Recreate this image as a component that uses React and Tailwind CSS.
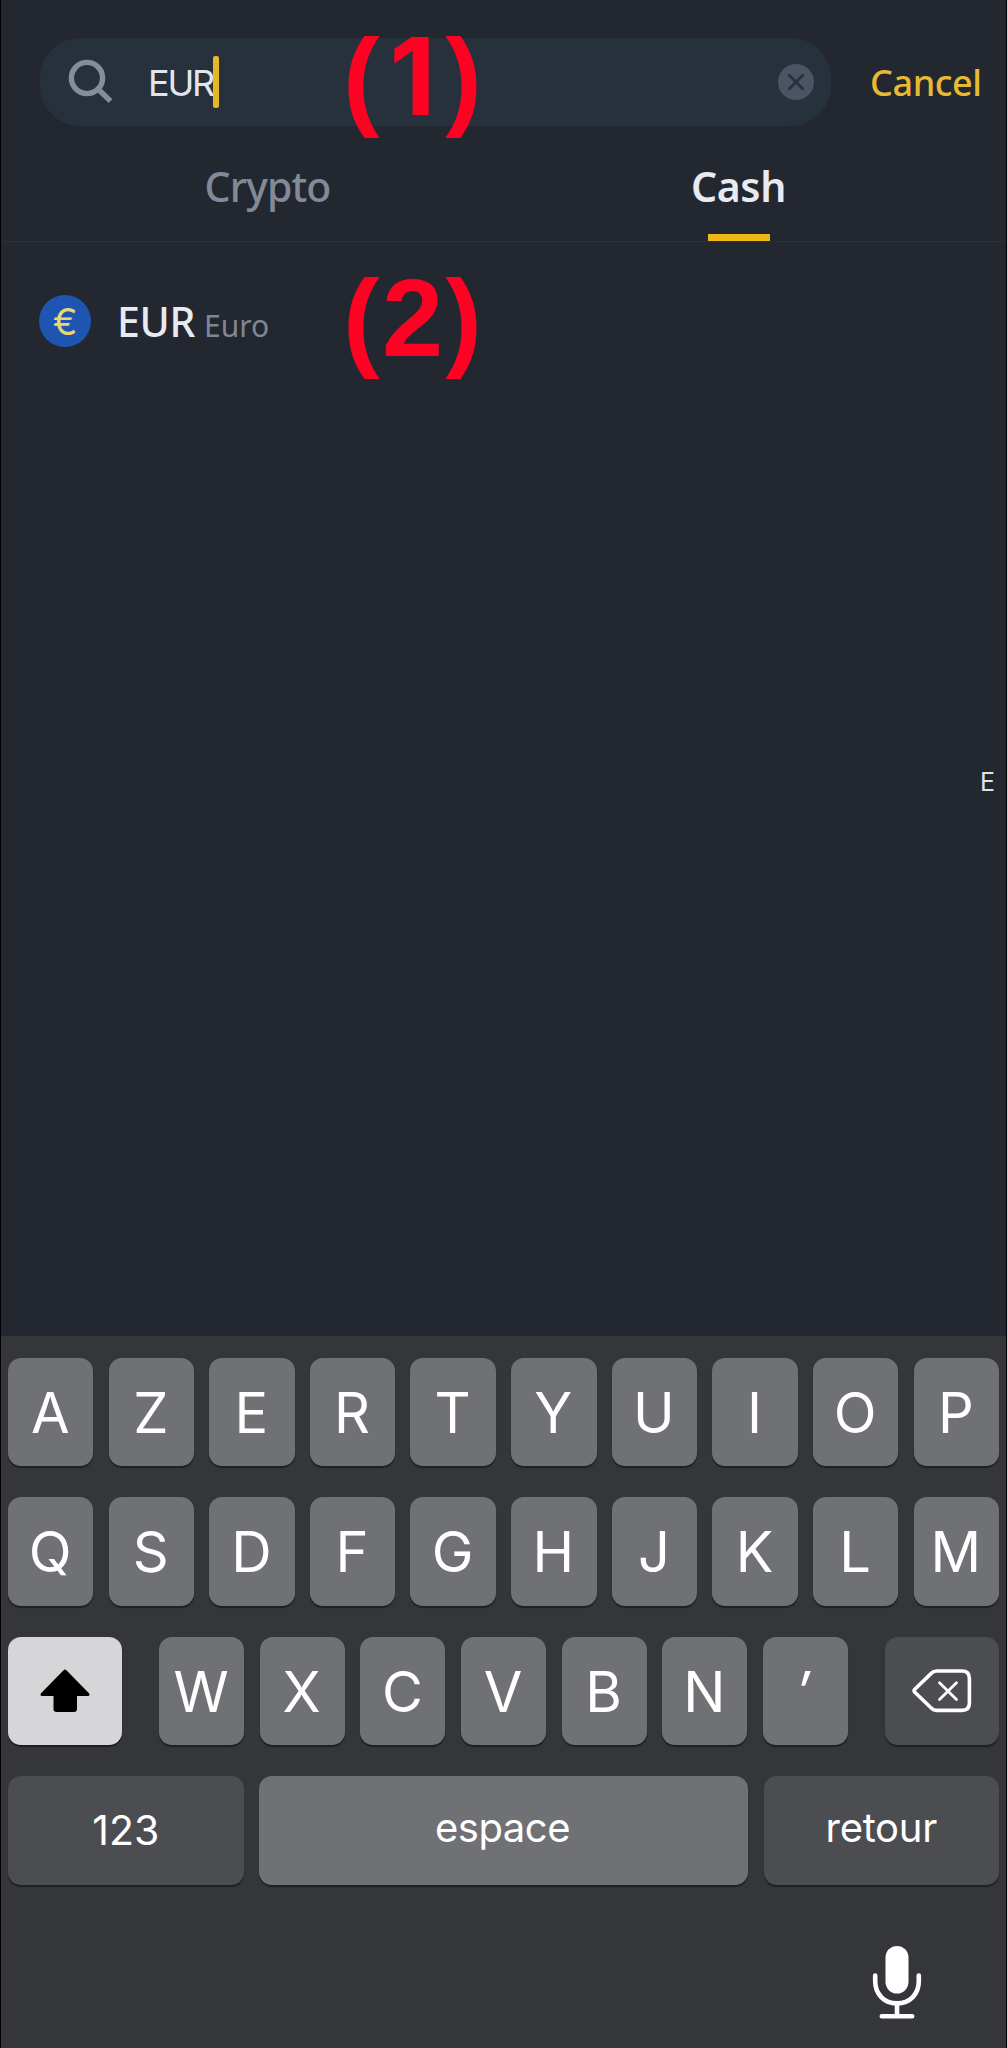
import React from "react";

const UI = "font-['Noto_Sans',sans-serif]";
const KEY =
  "flex items-center justify-center rounded-[13px] shadow-[0_2px_1px_#1f2023] ";
const LIGHT_KEY = KEY + "bg-[#707175]";
const DARK_KEY = KEY + "bg-[#4c4d51]";

function Letter({ children, slanted }) {
  return (
    <div className={LIGHT_KEY}>
      <span className={"pt-[2px] pr-[1px] text-[56px] leading-none font-normal " + (slanted ? "pr-[5px] italic" : "")}>
        {children}
      </span>
    </div>
  );
}

function SearchIcon() {
  return (
    <svg className="h-[48px] w-[48px] shrink-0" viewBox="0 0 48 48" fill="none" stroke="#848d9a" strokeWidth="5.4">
      <circle cx="23" cy="20" r="15.6" />
      <path d="M34 31L46.5 43" />
    </svg>
  );
}

function ShiftIcon() {
  return (
    <svg className="h-[44px] w-[50px]" viewBox="0 0 50 44">
      <path
        d="M23.6 1.2Q25 0 26.4 1.2L49 24.2Q50.6 27 47.6 27H37V40Q37 43 34 43H16.5Q13.5 43 13.5 40V27H2.4Q-.6 27 1 24.2Z"
        fill="#000"
      />
    </svg>
  );
}

function DeleteIcon() {
  return (
    <svg
      className="h-[44px] w-[60px]"
      viewBox="0 0 60 44"
      fill="none"
      stroke="#fff"
      strokeWidth="3.6"
      strokeLinejoin="round"
      strokeLinecap="round"
    >
      <path d="M24.5 2H50Q57.4 2 57.4 9.4V34Q57.4 41.4 50 41.4H24.5Q21.5 41.4 19.5 39.3L2.8 23.2Q1.3 21.7 2.8 20.2L19.5 4.1Q21.5 2 24.5 2Z" />
      <path d="M27.5 13.8L44.5 30.6M44.5 13.8L27.5 30.6" strokeWidth="2.8" />
    </svg>
  );
}

function MicIcon() {
  return (
    <svg className="h-[74px] w-[50px]" viewBox="0 0 50 74" fill="none" stroke="#fff" strokeWidth="4.6" strokeLinecap="round">
      <rect x="13.5" y="1" width="23" height="47.5" rx="11.5" fill="#fff" stroke="none" />
      <path d="M3.2 30.5V36C3.2 49 12 58.4 25 58.4S46.8 49 46.8 36V30.5" />
      <path d="M25 58.5V71M9.8 71.2H40.2" />
    </svg>
  );
}

function Annotation({ digit, digitClass = "" }) {
  return (
    <div className="flex h-[110px] w-[139px] items-baseline justify-center font-['Liberation_Sans',sans-serif] text-[110px] leading-[110px] font-bold text-[#fe0224]">
      <span>(</span>
      <span className={"flex w-[66px] justify-center " + digitClass}>{digit}</span>
      <span>)</span>
    </div>
  );
}

export default function App() {
  return (
    <div className={"flex h-[2048px] w-[1007px] flex-col overflow-hidden border-x border-black bg-[#232730] " + UI}>
      <header className="relative h-[242px] shrink-0 border-b border-[#2a303a]">
        <div className="flex h-[126px] pt-[38px]">
          <div className="ml-[39px] flex h-[88px] w-[791px] items-center rounded-[40px] bg-[#27313c] pr-[17px] pl-[24px]">
            <SearchIcon />
            <span className="ml-[36px] pt-[2px] font-['Inter',sans-serif] text-[36px] leading-[50px] tracking-[-2.2px] text-[#e2e5ee]">
              EUR
            </span>
            <span className="h-[52px] w-[6px] rounded-[2px] bg-[#e5b827]" />
            <svg className="ml-auto h-[36px] w-[36px]" viewBox="0 0 36 36">
              <circle cx="18" cy="18" r="18" fill="#4b5462" />
              <path d="M10.5 10.5L25.5 25.5M25.5 10.5L10.5 25.5" stroke="#27313c" strokeWidth="2.8" />
            </svg>
          </div>
          <span className="ml-[39px] text-[36px] leading-[90px] font-medium tracking-[-0.4px] text-[#e8b935]">Cancel</span>
        </div>
        <nav className="flex h-[115px] pl-[31px] text-[41px] font-medium">
          <div className="flex w-[471px] justify-center">
            <span className="leading-[120px] tracking-[-0.9px] text-[#838a97]">Crypto</span>
          </div>
          <div className="flex w-[471px] flex-col items-center">
            <span className="h-[108px] leading-[120px] font-semibold tracking-[-0.4px] text-[#e8eaf2]">Cash</span>
            <span className="h-[7px] w-[62px] bg-[#ecb818]" />
          </div>
        </nav>
        <div className="absolute top-[21px] left-[342px]">
          <Annotation digit="1" digitClass="font-['Inter',sans-serif] text-[107px]" />
        </div>
      </header>

      <main className="relative flex h-[1094px] shrink-0 flex-col">
        <div className="mt-[50px] ml-[38px] flex h-[58px] items-center">
          <div className="flex h-[52px] w-[52px] items-center justify-center rounded-full bg-[#1e55b0]">
            <span className="font-['Inter',sans-serif] text-[37px] leading-none font-normal text-[#e7d672]">€</span>
          </div>
          <div className="ml-[26px] flex items-baseline">
            <span className="text-[41px] leading-[58px] font-medium tracking-[-0.3px] text-[#e8eaf2]">EUR</span>
            <span className="ml-[9px] text-[30px] leading-[40px] text-[#7f8795]">Euro</span>
          </div>
        </div>
        <div className="mt-[409px] mr-[11px] self-end font-['Inter',sans-serif] text-[25px] leading-[46px] text-[#dfe2ea]">
          E
        </div>
        <div className="absolute top-[21px] left-[342px]">
          <Annotation digit="2" />
        </div>
      </main>

      <section className="flex grow flex-col bg-[#35363a] px-[7px] pt-[22px] font-['Inter',sans-serif] text-white">
        <div className="grid h-[387px] shrink-0 grid-rows-3 gap-y-[31px]">
          <div className="grid grid-cols-10 gap-x-[15.2px]">
            {[..."AZERTYUIOP"].map((c) => (
              <Letter key={c}>{c}</Letter>
            ))}
          </div>
          <div className="grid grid-cols-10 gap-x-[15.2px]">
            {[..."QSDFGHJKLM"].map((c) => (
              <Letter key={c}>{c}</Letter>
            ))}
          </div>
          <div className="flex justify-between">
            <div className={KEY + "w-[114px] bg-[#d6d6d8]"}>
              <ShiftIcon />
            </div>
            <div className="grid w-[689px] grid-cols-7 gap-x-[15.6px]">
              {[..."WXCVBN′"].map((c) => (
                <Letter key={c} slanted={c === "′"}>{c}</Letter>
              ))}
            </div>
            <div className={DARK_KEY + " w-[114px]"}>
              <DeleteIcon />
            </div>
          </div>
        </div>
        <div className="mt-[31px] flex h-[109px] shrink-0 justify-between text-[40px] leading-none">
          <div className={DARK_KEY + " w-[235.5px]"}>
            <span className="text-[41px]">123</span>
          </div>
          <div className={LIGHT_KEY + " w-[488.5px]"}>
            <span className="pr-[2px] pb-[6px] tracking-[-0.5px]">espace</span>
          </div>
          <div className={DARK_KEY + " w-[235.5px]"}>
            <span className="pb-[6px] tracking-[-0.3px]">retour</span>
          </div>
        </div>
        <div className="mt-[60px] mr-[77px] self-end">
          <MicIcon />
        </div>
      </section>
    </div>
  );
}
